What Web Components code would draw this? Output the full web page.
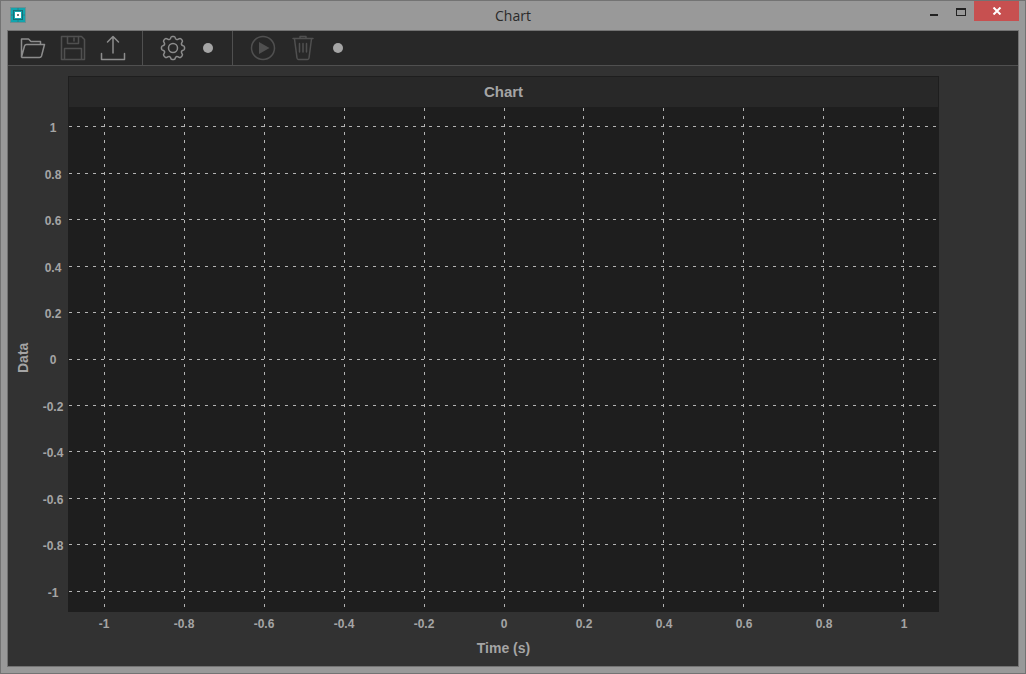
<!DOCTYPE html>
<html lang="en">
<head>
<meta charset="utf-8">
<title>Chart</title>
<style>
  html, body {
    height: 100%;
    margin: 0;
  }
</style>
</head>
<body>
<app-window heading="Chart">
  <tool-bar slot="toolbar">
    <tool-group>
      <tool-button icon="open" label="Open"></tool-button>
      <tool-button icon="save" label="Save" disabled></tool-button>
      <tool-button icon="export" label="Export"></tool-button>
    </tool-group>
    <tool-group>
      <tool-button icon="settings" label="Settings"></tool-button>
      <tool-button icon="dot" label="Settings options"></tool-button>
    </tool-group>
    <tool-group>
      <tool-button icon="play" label="Play" disabled></tool-button>
      <tool-button icon="trash" label="Clear" disabled></tool-button>
      <tool-button icon="dot" label="Run options"></tool-button>
    </tool-group>
  </tool-bar>
  <chart-view heading="Chart" x-title="Time (s)" y-title="Data"></chart-view>
</app-window>

<script>
const ICONS = {
  open: `<path d="M1.5 22V4H8.500L11 6.500H20.500V9.500M1.500 22L4.500 11Q5 9.500 6.500 9.500H24.500L21.500 21Q21 22.500 19.500 22.500H2Z"/>`,
  save: `<path d="M1.500 1.500H21.500L24.500 4.500V24.500H1.500Z"/><path d="M7.500 1.500V8.500H18.500V1.500M14 3V6M4.500 24V13.500H21.500V24"/>`,
  export: `<path d="M13 18V2M7.500 7L13 1.500L18.500 7M1.500 18.500V24.500H24.500V18.500"/>`,
  settings: `<path d="M10.500 3.500Q11 1.500 12 1.500H14Q15 1.500 15.500 3.500 16.500 5.300 18.300 4.200 20 3 20.800 3.800L22.200 5.200Q23 6 21.800 7.700 20.700 9.500 22.500 10.500 24.500 11 24.500 12V14Q24.500 15 22.500 15.500 20.700 16.500 21.800 18.300 23 20 22.200 20.800L20.800 22.200Q20 23 18.300 21.800 16.500 20.700 15.500 22.500 15 24.500 14 24.500H12Q11 24.500 10.500 22.500 9.500 20.700 7.700 21.800 6 23 5.200 22.200L3.800 20.800Q3 20 4.200 18.300 5.300 16.500 3.500 15.500 1.500 15 1.500 14V12Q1.500 11 3.500 10.500 5.300 9.500 4.200 7.700 3 6 3.800 5.200L5.200 3.800Q6 3 7.700 4.200 9.500 5.300 10.500 3.500Z"/><circle cx="13" cy="13" r="4.500"/>`,
  play: `<circle cx="13" cy="13" r="11.500"/><path d="M9 7L19.500 13L9 19Z" fill="currentColor" stroke="none"/>`,
  trash: `<path d="M3 3.500H23M10 3V1.500H16V3M4.500 4L7 23Q7.200 24.500 8.500 24.500H17.500Q18.800 24.500 19 23L21.500 4M9.500 8.500V17M13 8.500V17M16.500 8.500V17"/>`,
  dot: `<circle cx="13" cy="13" r="5" fill="currentColor" stroke="none"/>`,
};

class AppWindow extends HTMLElement {
  constructor() {
    super();
    this.attachShadow({ mode: "open" });
  }

  connectedCallback() {
    this.shadowRoot.innerHTML = `
      <style>
        :host {
          display: flex;
          flex-direction: column;
          box-sizing: border-box;
          min-height: 100vh;
          padding: 0 6px 6px;
          border: 1px solid #737373;
          background: #999;
        }

        header {
          display: grid;
          grid-template-columns: 1fr auto 1fr;
          height: 29px;
        }

        .logo {
          width: 16px;
          height: 16px;
          margin: 6px 0 0 3px;
        }

        h1 {
          margin: 0;
          font: 14px/29px "Open Sans", "Noto Sans", sans-serif;
          color: #2a2a2a;
        }

        .controls {
          display: flex;
          justify-content: flex-end;
          align-items: flex-start;
        }

        button {
          width: 27px;
          height: 20px;
          padding: 0;
          border: 0;
          background: none;
        }

        button.close {
          width: 45px;
          background: #c75050;
        }

        button svg {
          display: block;
          margin: auto;
        }

        main {
          flex: 1;
          display: flex;
          flex-direction: column;
          border: 1px solid #737373;
          background: #323232;
        }

        ::slotted(chart-view) {
          flex: 1;
        }
      </style>
      <header>
        <svg class="logo" viewBox="0 0 16 16" aria-hidden="true">
          <rect width="16" height="16" fill="#6f8f91"/>
          <rect x="1" y="1" width="14" height="14" fill="#12a5ae"/>
          <path d="M8 1V4M8 12V15M1 8H4M12 8H15" stroke="#2b7f86" fill="none"/>
          <rect x="3.500" y="3.500" width="9" height="9" fill="none" stroke="#176f76"/>
          <rect x="5" y="5" width="6" height="6" fill="#fff"/>
          <rect x="7" y="7" width="2" height="2" fill="#777"/>
        </svg>
        <h1></h1>
        <div class="controls">
          <button aria-label="Minimize"><svg width="12" height="12"><path d="M2 9H10V11H2Z" fill="#222"/></svg></button>
          <button aria-label="Maximize"><svg width="12" height="12"><path d="M1 3H11V11H1ZM2 5V10H10V5Z" fill="#222" fill-rule="evenodd"/></svg></button>
          <button class="close" aria-label="Close"><svg width="10" height="8"><path d="M1.500 .5L8.500 7.500M8.500 .5L1.500 7.500" stroke="#fff" stroke-width="2"/></svg></button>
        </div>
      </header>
      <main>
        <slot name="toolbar"></slot>
        <slot></slot>
      </main>
    `;
    this.shadowRoot.querySelector("h1").textContent = this.getAttribute("heading");
  }
}

class ToolBar extends HTMLElement {
  constructor() {
    super();
    this.attachShadow({ mode: "open" });
    this.shadowRoot.innerHTML = `
      <style>
        :host {
          display: flex;
          height: 34px;
          border-bottom: 1px solid #505050;
          background: #282828;
        }
      </style>
      <slot></slot>
    `;
  }
}

class ToolGroup extends HTMLElement {
  constructor() {
    super();
    this.attachShadow({ mode: "open" });
    this.shadowRoot.innerHTML = `
      <style>
        :host {
          display: flex;
          align-items: center;
          padding: 0 9px 0 10px;
          border-right: 1px solid #505050;
        }

        :host(:first-child) {
          padding-left: 5px;
        }

        :host(:last-child) {
          border-right: 0;
        }
      </style>
      <slot></slot>
    `;
  }
}

class ToolButton extends HTMLElement {
  constructor() {
    super();
    this.attachShadow({ mode: "open" });
  }

  connectedCallback() {
    const icon = this.getAttribute("icon");
    this.shadowRoot.innerHTML = `
      <style>
        :host {
          display: block;
        }

        button {
          display: flex;
          align-items: center;
          justify-content: center;
          width: 40px;
          height: 34px;
          padding: 0;
          border: 0;
          background: none;
          color: #8c8c8c;
        }

        button:disabled {
          color: #505050;
        }

        button.dot {
          width: 30px;
          color: #a5a5a5;
        }

        svg {
          fill: none;
          stroke: currentColor;
          stroke-width: 1.5;
          stroke-linejoin: round;
          stroke-linecap: round;
        }
      </style>
      <button class="${icon}"><svg width="26" height="26" viewBox="0 0 26 26">${ICONS[icon]}</svg></button>
    `;
    const button = this.shadowRoot.querySelector("button");
    button.setAttribute("aria-label", this.getAttribute("label"));
    button.disabled = this.hasAttribute("disabled");
  }
}

class ChartView extends HTMLElement {
  constructor() {
    super();
    this.attachShadow({ mode: "open" });
  }

  connectedCallback() {
    this.render();
    const plot = this.shadowRoot.querySelector(".plot");
    new ResizeObserver(() => this.drawGrid()).observe(plot);
    this.drawGrid();
  }

  render() {
    const ticks = [-1, -0.8, -0.6, -0.4, -0.2, 0, 0.2, 0.4, 0.6, 0.8, 1];
    const labels = (list) => list.map((t) => `<span>${t}</span>`).join("");

    this.shadowRoot.innerHTML = `
      <style>
        :host {
          display: grid;
          grid-template-columns: 30px 30px minmax(0, 1fr);
          grid-template-rows: minmax(0, 1fr) 24px 26px;
          padding: 10px 79px 4px 0;
          font: bold 12px/14px "Liberation Sans", Arial, sans-serif;
          color: #a5a5a5;
        }

        .y-title {
          display: flex;
          align-items: center;
          justify-content: center;
          padding-bottom: 28px;
          font-size: 14px;
          writing-mode: vertical-rl;
          transform: rotate(180deg);
        }

        .y-axis {
          display: grid;
          grid-template-rows: repeat(11, minmax(0, 1fr));
          place-items: center;
          margin: 29px 0 -4px;
        }

        .frame {
          display: flex;
          flex-direction: column;
          border: 1px solid #1e1e1e;
          background: #1e1e1e;
        }

        h2 {
          margin: 0;
          background: #282828;
          font-size: 15px;
          line-height: 30px;
          text-align: center;
        }

        .plot {
          flex: 1;
          min-height: 0;
          margin-top: 1px;
        }

        svg {
          display: block;
          width: 100%;
          height: 100%;
        }

        line {
          stroke: #b4b4b4;
          stroke-dasharray: 3 5;
        }

        .x-axis {
          grid-column: 3;
          display: grid;
          grid-template-columns: repeat(11, minmax(0, 1fr));
          place-items: center;
          margin: 0 -5px 0 -4px;
        }

        .x-title {
          grid-column: 3;
          font-size: 14px;
          line-height: 24px;
          text-align: center;
        }
      </style>
      <div class="y-title">${this.getAttribute("y-title")}</div>
      <div class="y-axis">${labels([...ticks].reverse())}</div>
      <div class="frame">
        <h2>${this.getAttribute("heading")}</h2>
        <div class="plot"><svg aria-hidden="true"></svg></div>
      </div>
      <div class="x-axis">${labels(ticks)}</div>
      <div class="x-title">${this.getAttribute("x-title")}</div>
    `;
  }

  // lines snap to whole pixels so that they stay one pixel wide
  drawGrid() {
    const svg = this.shadowRoot.querySelector("svg");
    const { width, height } = svg.parentElement.getBoundingClientRect();
    let lines = "";
    for (let i = 0; i < 11; i++) {
      const x = Math.floor(width * (0.0412 + i * 0.0919)) + 0.5;
      const y = Math.floor(height * (0.0376 + i * 0.0923)) + 0.5;
      lines += `<line x1="${x}" y1="0" x2="${x}" y2="${height - 3}"/>`;
      lines += `<line x1="0" y1="${y}" x2="${width - 2}" y2="${y}"/>`;
    }
    svg.innerHTML = lines;
  }
}

customElements.define("app-window", AppWindow);
customElements.define("tool-bar", ToolBar);
customElements.define("tool-group", ToolGroup);
customElements.define("tool-button", ToolButton);
customElements.define("chart-view", ChartView);
</script>
</body>
</html>
